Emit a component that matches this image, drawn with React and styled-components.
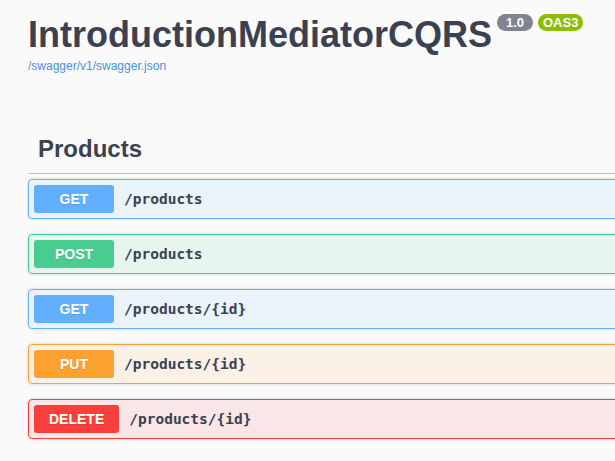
import styled, { createGlobalStyle } from 'styled-components';

const GlobalStyle = createGlobalStyle`
    html, body {
        margin: 0;
        padding: 0;
        overflow: hidden;
        background: #fafafa;
        font-family: 'Liberation Sans', Arial, sans-serif;
    }
`;

const methods = {
    GET: '#61affe',
    POST: '#49cc90',
    PUT: '#fca130',
    DELETE: '#f93e3e',
};

const Wrapper = styled.div`
    width: 1200px;
    padding: 14px 0 0 28px;
    color: #3b4151;
`;

const Info = styled.section`
    margin-bottom: 52px;
`;

const Title = styled.h2`
    display: flex;
    align-items: flex-start;
    margin: 0;
    font-size: 36px;
    font-weight: 700;
    line-height: normal;
    color: #3b4151;
`;

const Badge = styled.span`
    display: inline-block;
    margin-left: 5px;
    min-width: ${p => p.$min || 0}px;
    padding: 1px 5px;
    box-sizing: border-box;
    border-radius: 57px;
    background: ${p => p.$color};
    color: #fff;
    font-size: 13px;
    font-weight: 700;
    line-height: 15px;
    text-align: center;
`;

const SpecLink = styled.a`
    display: block;
    margin-top: 3px;
    font-size: 12px;
    line-height: normal;
    color: #4990e2;
    text-decoration: none;
`;

const Tag = styled.h3`
    display: flex;
    align-items: center;
    margin: 0 0 5px;
    padding: 10px 20px 10px 10px;
    border-bottom: 1px solid rgba(59, 65, 81, 0.3);
    font-size: 24px;
    font-weight: 700;
    line-height: normal;
    color: #3b4151;
`;

const OpBlock = styled.div`
    display: flex;
    align-items: center;
    margin-bottom: 15px;
    padding: 5px;
    border: 1px solid ${p => p.$color};
    border-radius: 4px;
    background: ${p => p.$color}1a;
    box-shadow: 0 0 3px rgba(0, 0, 0, 0.19);
`;

const Method = styled.span`
    min-width: 80px;
    padding: 6px 15px;
    box-sizing: border-box;
    border-radius: 3px;
    background: ${p => p.$color};
    color: #fff;
    font-size: 14px;
    font-weight: 700;
    line-height: 16px;
    text-align: center;
    text-shadow: 0 1px 0 rgba(0, 0, 0, 0.1);
`;

const Path = styled.span`
    padding: 0 10px;
    font-family: 'DejaVu Sans Mono', 'Liberation Mono', monospace;
    font-size: 14.5px;
    font-weight: 700;
    color: #3b4151;
`;

const operations = [
    { method: 'GET', path: '/products' },
    { method: 'POST', path: '/products' },
    { method: 'GET', path: '/products/{id}' },
    { method: 'PUT', path: '/products/{id}' },
    { method: 'DELETE', path: '/products/{id}' },
];

function App() {
    return (
        <Wrapper>
            <GlobalStyle />
            <Info>
                <Title>
                    <span>IntroductionMediatorCQRS</span>
                    <Badge $color="#7d8492" $min={36}>1.0</Badge>
                    <Badge $color="#89bf04">OAS3</Badge>
                </Title>
                <SpecLink href="#">/swagger/v1/swagger.json</SpecLink>
            </Info>
            <Tag>Products</Tag>
            {operations.map((op, i) => (
                <OpBlock key={i} $color={methods[op.method]}>
                    <Method $color={methods[op.method]}>{op.method}</Method>
                    <Path>{op.path}</Path>
                </OpBlock>
            ))}
        </Wrapper>
    );
}

export default App;
